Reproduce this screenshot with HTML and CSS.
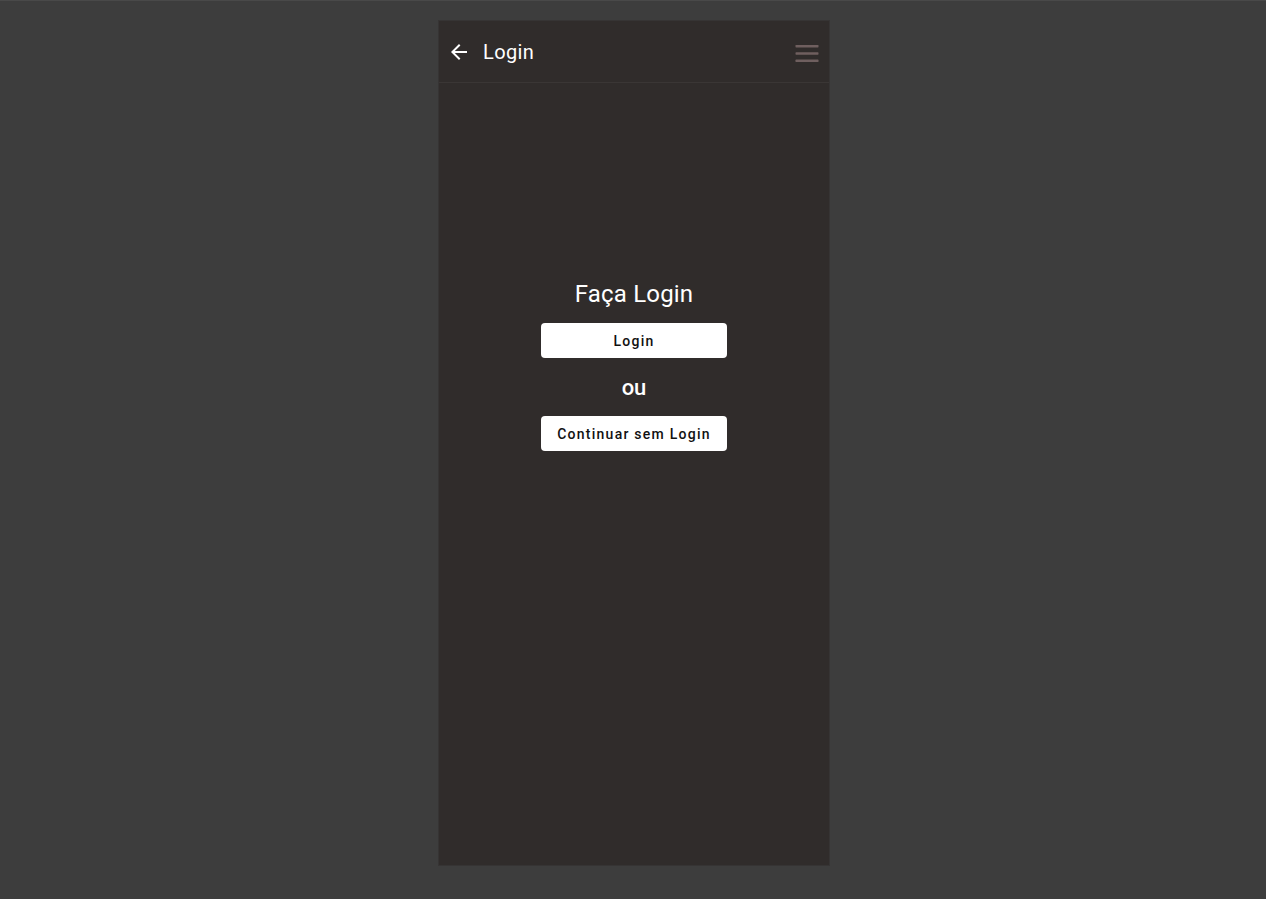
FILE: index.html
```html
<!DOCTYPE html>
<html lang="pt">
<head>
<meta charset="utf-8">
<title>Login</title>
<link rel="stylesheet" href="styles.css">
</head>
<body>
<div class="phone">
  <header class="bar">
    <svg class="back" width="24" height="24" viewBox="0 0 24 24"><path fill="#fff" d="M20 11H7.83l5.59-5.59L12 4l-8 8 8 8 1.41-1.41L7.83 13H20v-2z"/></svg>
    <span class="title">Login</span>
    <svg class="menu" width="24" height="18" viewBox="0 0 24 18"><rect x="0.5" y="1" width="23" height="2.4" rx="0.6" fill="#6f5f5f"/><rect x="0.5" y="8.3" width="23" height="2.4" rx="0.6" fill="#6f5f5f"/><rect x="0.5" y="15.6" width="23" height="2.4" rx="0.6" fill="#6f5f5f"/></svg>
  </header>
  <main class="content">
    <h1 class="heading">Faça Login</h1>
    <button class="btn">Login</button>
    <div class="or">ou</div>
    <button class="btn">Continuar sem Login</button>
  </main>
</div>
</body>
</html>
```
FILE: styles.css
```css
html, body {
  margin: 0;
  padding: 0;
}
body {
  background: #3d3d3d;
  border-top: 1px solid #494949;
  height: 898px;
  font-family: Roboto, "Noto Sans", sans-serif;
}
.phone {
  width: 392px;
  height: 846px;
  margin: 19px 0 0 438px;
  background: #302c2b;
  border: 1px solid #363434;
  box-sizing: border-box;
  display: flex;
  flex-direction: column;
}
.bar {
  height: 62px;
  border-bottom: 1px solid #3a3635;
  display: flex;
  align-items: center;
  padding: 0 10px 0 8px;
  box-sizing: border-box;
}
.back {
  display: block;
  margin-top: 1px;
}
.title {
  color: #fff;
  font-size: 20px;
  font-weight: 400;
  letter-spacing: 0.4px;
  margin-left: 12px;
  margin-top: 1px;
}
.menu {
  margin-left: auto;
  display: block;
  margin-top: 3px;
}
.content {
  display: flex;
  flex-direction: column;
  align-items: center;
  padding-top: 197px;
}
.heading {
  margin: 0;
  color: #fff;
  font-size: 24px;
  font-weight: 400;
  letter-spacing: 0.2px;
  line-height: 28px;
}
.btn {
  margin-top: 15px;
  width: 186px;
  height: 35px;
  border: none;
  border-radius: 4px;
  background: #fff;
  color: #111;
  font-family: Roboto, sans-serif;
  font-size: 14px;
  font-weight: 500;
  letter-spacing: 1.25px;
  padding: 0;
}
.or {
  color: #fff;
  font-size: 22px;
  font-weight: 500;
  line-height: 26px;
  margin-top: 17px;
  margin-bottom: 0;
}
```
